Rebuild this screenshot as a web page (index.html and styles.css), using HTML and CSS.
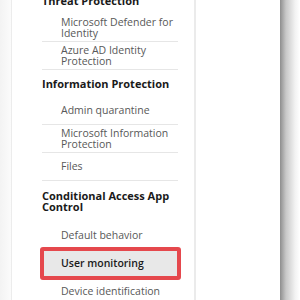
FILE: index.html
```html
<!DOCTYPE html>
<html lang="en">
<head>
    <meta charset="UTF-8">
    <title>Settings</title>
    <link rel="stylesheet" href="styles.css">
</head>
<body>

<div class="edge-left"></div>

<div class="panel">
    <!-- Settings navigation -->
    <div class="nav">
        <div class="group">
            <div class="group-title">Threat Protection</div>
            <div class="item">Microsoft Defender for Identity</div>
            <div class="item">Azure AD Identity Protection</div>
        </div>

        <div class="group">
            <div class="group-title">Information Protection</div>
            <div class="item">Admin quarantine</div>
            <div class="item">Microsoft Information Protection</div>
            <div class="item">Files</div>
        </div>

        <div class="group">
            <div class="group-title">Conditional Access App Control</div>
            <div class="item">Default behavior</div>
            <div class="item selected">User monitoring</div>
            <div class="item">Device identification</div>
        </div>
    </div>

    <div class="divider"></div>
    <div class="detail"></div>
</div>

<div class="edge-right"></div>

</body>
</html>
```

FILE: styles.css
```css
body {
    margin: 0;
    height: 300px;
    overflow: hidden;
    display: flex;
    background-color: #fff;
    font-family: 'Open Sans', 'Noto Sans', sans-serif;
}
.edge-left {
    width: 11px;
    background: linear-gradient(to right, #f3f3f3, #fbfbfb);
    border-right: 1px solid #ececec;
}
.panel {
    flex: 1;
    display: flex;
    background-color: #fff;
}
.nav {
    width: 136px;
    padding-left: 30px;
    padding-right: 16px;
    margin-top: -13px;
}
.divider {
    width: 2px;
    background-color: #ebebeb;
}
.detail {
    flex: 1;
}
.edge-right {
    width: 20px;
    background: linear-gradient(to right, #8e8e8e, #c8c8c8 30%, #f2f2f2 75%, #fff);
}
/* Group headings */
.group-title {
    font-size: 11px;
    font-weight: bold;
    color: #1a1a1a;
    line-height: 11px;
    padding: 8px 0 8px;
}
.group:last-child .group-title {
    padding: 9px 0 10px;
}
/* Menu entries */
.item {
    position: relative;
    min-height: 28px;
    display: flex;
    align-items: center;
    padding-left: 19px;
    padding-right: 4px;
    font-size: 10.5px;
    line-height: 10.5px;
    color: #585858;
    border-bottom: 1px solid #e6e6e6;
    box-sizing: border-box;
}
.item.selected {
    background-color: #e8e8e8;
    color: #1a1a1a;
    font-weight: 600;
    border-bottom-color: transparent;
}
/* Red highlight drawn around the selected entry */
.item.selected::after {
    content: "";
    position: absolute;
    top: -3px;
    bottom: -3px;
    left: -2px;
    right: -3px;
    border: 4px solid #e5484d;
    border-radius: 3px;
}
```
